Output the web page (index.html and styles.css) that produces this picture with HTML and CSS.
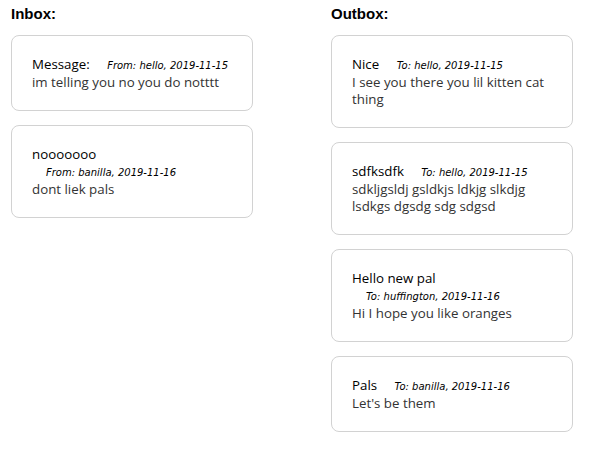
FILE: index.html
```html
<!DOCTYPE html>
<html>
<head>
<meta charset="utf-8">
<link rel="stylesheet" href="styles.css">
</head>
<body>
<div class="boxes">
  <section class="col">
    <h2 class="heading">Inbox:</h2>
    <div class="card">
      <div class="head"><span class="title">Message:</span> <span class="meta">From: hello, 2019-11-15</span></div>
      <div class="body">im telling you no you do notttt</div>
    </div>
    <div class="card">
      <div class="head"><span class="title">nooooooo</span> <span class="meta">From: banilla, 2019-11-16</span></div>
      <div class="body">dont liek pals</div>
    </div>
  </section>
  <section class="col">
    <h2 class="heading">Outbox:</h2>
    <div class="card">
      <div class="head"><span class="title">Nice</span> <span class="meta">To: hello, 2019-11-15</span></div>
      <div class="body">I see you there you lil kitten cat thing</div>
    </div>
    <div class="card">
      <div class="head"><span class="title">sdfksdfk</span> <span class="meta">To: hello, 2019-11-15</span></div>
      <div class="body">sdkljgsldj gsldkjs ldkjg slkdjg lsdkgs dgsdg sdg sdgsd</div>
    </div>
    <div class="card">
      <div class="head"><span class="title">Hello new pal</span> <span class="meta">To: huffington, 2019-11-16</span></div>
      <div class="body">Hi I hope you like oranges</div>
    </div>
    <div class="card">
      <div class="head"><span class="title">Pals</span> <span class="meta">To: banilla, 2019-11-16</span></div>
      <div class="body">Let's be them</div>
    </div>
  </section>
</div>
</body>
</html>
```
FILE: styles.css
```css
html, body { margin: 0; padding: 0; background: #fff; }
body { font-family: "Open Sans", "Noto Sans", sans-serif; }
.boxes {
  display: grid;
  grid-template-columns: 242px 242px;
  column-gap: 78px;
  padding: 5px 0 0 11px;
  align-items: start;
}
.col { display: flex; flex-direction: column; gap: 14px; }
.heading {
  margin: 0 0 -1px 0;
  font-family: "Liberation Sans", Arial, sans-serif;
  font-size: 15px;
  font-weight: bold;
  line-height: 17px;
  color: #000;
}
.card {
  border: 1px solid #d2d2d2;
  border-radius: 8px;
  padding: 20px 20px 19px 20px;
  font-size: 13.3px;
  line-height: 17px;
}
.title { color: #000; }
.meta {
  display: inline-block;
  margin-left: 14px;
  font-family: "DejaVu Sans", Verdana, sans-serif;
  font-style: italic;
  font-size: 10px;
  color: #000;
}
.body { color: #333; }
```
